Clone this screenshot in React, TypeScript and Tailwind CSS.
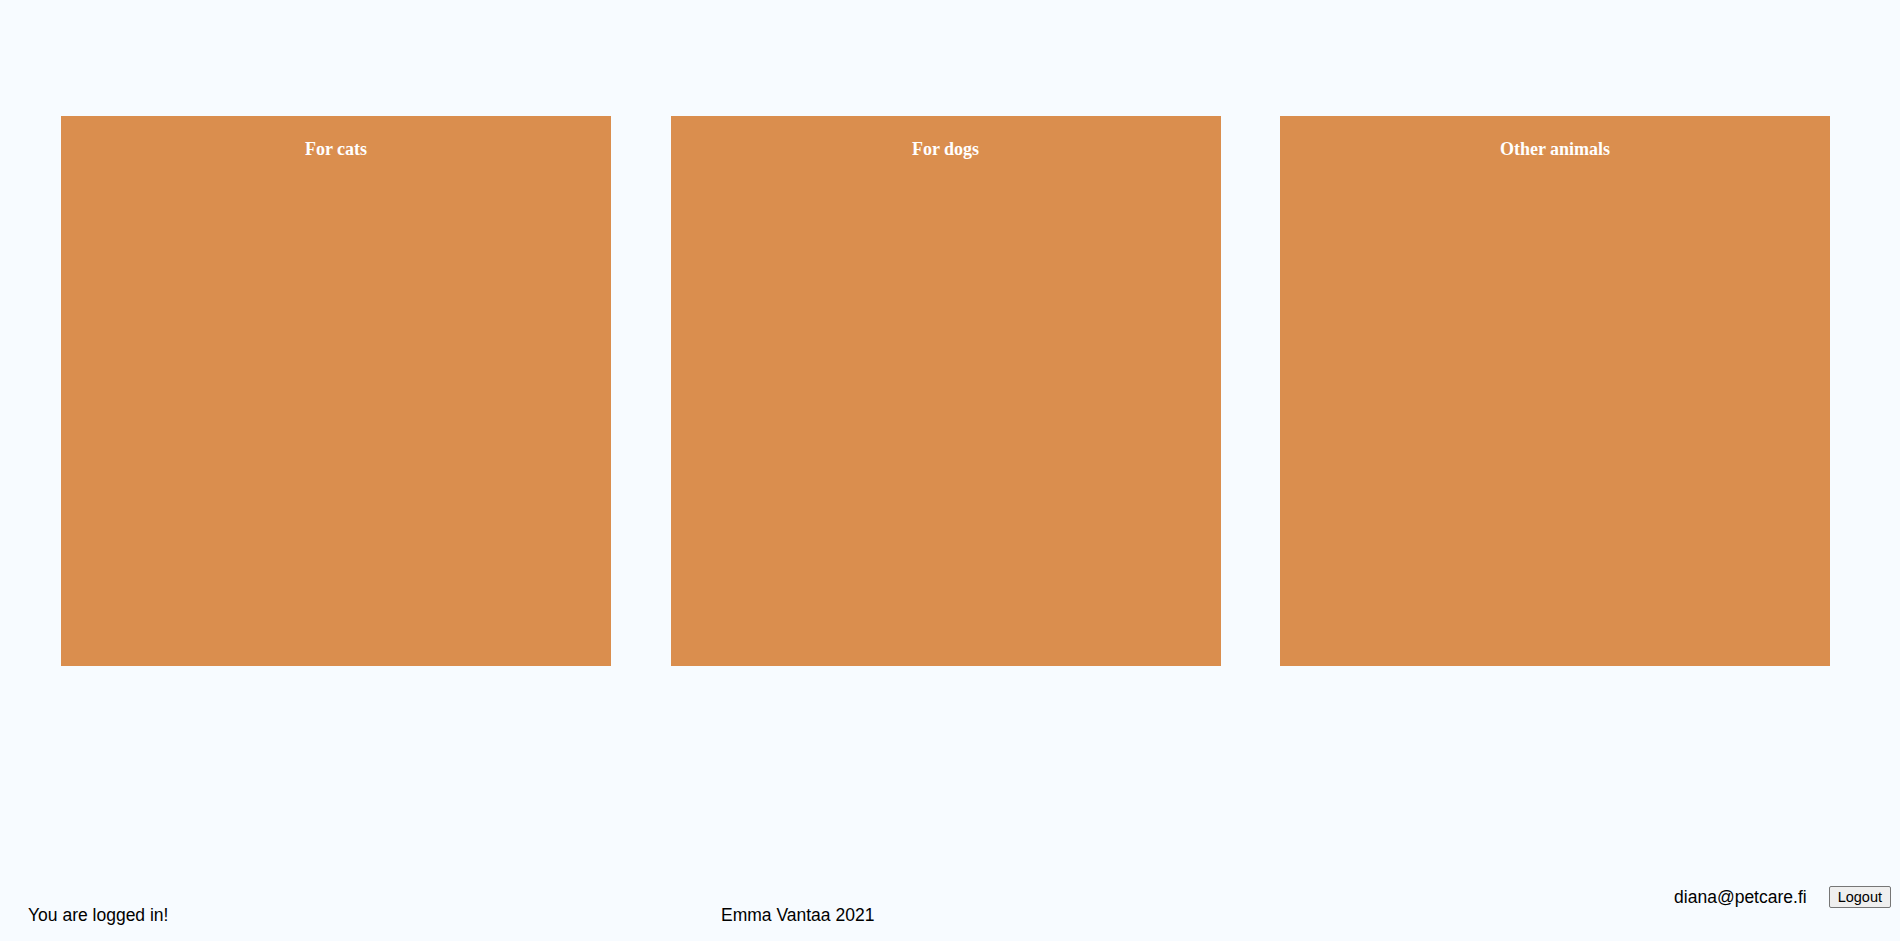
import React from "react";

const categories = ["For cats", "For dogs", "Other animals"];

function CategoryCard({ title }: { title: string }) {
  return (
    <div className="w-[550px] h-[550px] bg-[#da8e4e] shrink-0 pt-[23px]">
      <h3
        className="text-center text-white font-bold text-[18px] leading-[21px]"
        style={{ fontFamily: '"Liberation Serif", "Times New Roman", serif' }}
      >
        {title}
      </h3>
    </div>
  );
}

function App() {
  const user = "diana@petcare.fi";

  return (
    <div
      className="h-screen w-full bg-[#f7fbff] flex flex-col text-black"
      style={{ fontFamily: '"Liberation Sans", Arial, sans-serif' }}
    >
      <main className="flex-1 pt-[116px] pl-[61px] flex gap-[59.5px]">
        {categories.map((c) => (
          <CategoryCard key={c} title={c} />
        ))}
      </main>

      <footer className="flex items-end pb-[16px] text-[17.5px] leading-[20px]">
        <span className="pl-[28px] w-[721px]">You are logged in!</span>
        <span>Emma Vantaa 2021</span>
        <div className="ml-auto mb-[17px] pr-[9px] flex items-center gap-[22px]">
          <span>{user}</span>
          <button className="h-[22px] px-[8px] text-[14.5px] leading-none bg-[#efefef] border border-[#767676] rounded-[2px] text-black">
            Logout
          </button>
        </div>
      </footer>
    </div>
  );
}

export default App;
